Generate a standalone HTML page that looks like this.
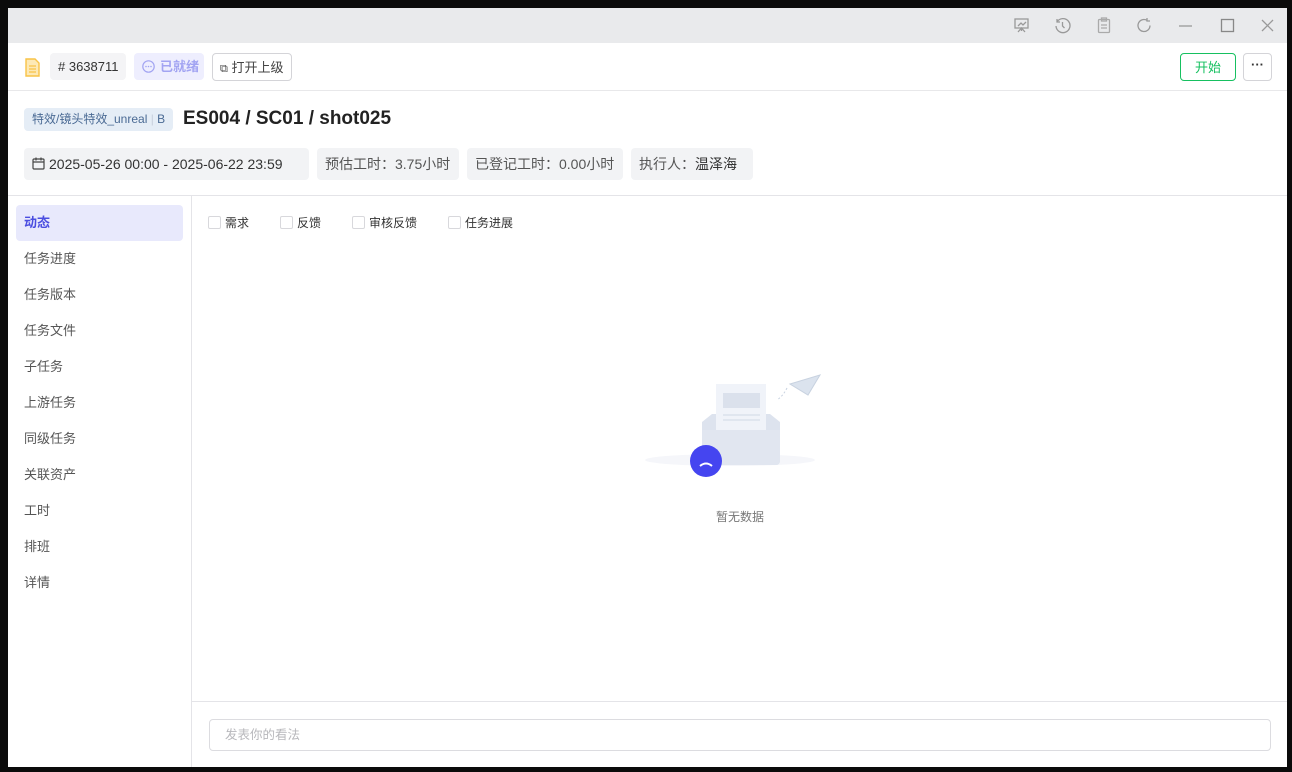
<!DOCTYPE html>
<html><head><meta charset="utf-8"><style>
*{box-sizing:border-box;margin:0;padding:0}
body{width:1292px;height:772px;background:#0b0b0b;font-family:"Liberation Sans","Noto Sans CJK SC",sans-serif;position:relative;overflow:hidden;color:#333}
#app{position:absolute;left:8px;top:8px;width:1279px;height:759px;background:#fff;overflow:hidden}
.tb{position:absolute;left:0;top:0;width:100%;height:35px;background:#e9eaec}
.tb svg{position:absolute;top:9px}
.hdr{position:absolute;left:0;top:35px;width:100%;height:48px;border-bottom:1px solid #e8e8ea}
.pill{position:absolute;top:10px;height:27px;border-radius:4px;font-size:13px;line-height:27px;padding:0 8px;white-space:nowrap}
.ttl{position:absolute;top:83px;left:0;width:100%;height:105px;border-bottom:1px solid #e4e4e8}
.chip{position:absolute;top:57px;height:32px;background:#f2f3f5;border-radius:4px;font-size:14px;line-height:32px;color:#555;padding:0 8px;white-space:nowrap}
.side{position:absolute;left:0;top:188px;width:184px;bottom:0;border-right:1px solid #e4e4e8}
.side div{height:36px;line-height:36px;font-size:13px;color:#555;padding-left:8px;margin:0 8px;border-radius:4px}
.side .act{background:#e8e9fc;color:#4a4de0;font-weight:bold;margin-top:9px}
.cb{position:absolute;top:208px;font-size:12px;color:#333;line-height:13px;white-space:nowrap}
.cb i{display:inline-block;width:13px;height:13px;border:1px solid #d8d8dc;border-radius:2px;vertical-align:-2px;margin-right:4px}
</style></head><body>
<div id="app">
<div class="tb">
<svg style="left:1005px" width="17" height="17" viewBox="0 0 17 17" fill="none" stroke="#999" stroke-width="1.3"><rect x="2" y="2" width="13" height="9"/><path d="M5 9l3-3 2 2 3-3M8.5 11v3M5 15l3.5-4 3.5 4"/></svg>
<svg style="left:1046px" width="17" height="17" viewBox="0 0 17 17" fill="none" stroke="#999" stroke-width="1.3"><path d="M3 5A7 7 0 1 1 2 9M3 2v3h3M8.5 5v4l2 2"/></svg>
<svg style="left:1088px" width="16" height="17" viewBox="0 0 16 17" fill="none" stroke="#aaa" stroke-width="1.3"><rect x="2.5" y="2.5" width="11" height="13" rx="1"/><rect x="5.5" y="1" width="5" height="3"/><path d="M5 8h6M5 11h6"/></svg>
<svg style="left:1128px" width="17" height="17" viewBox="0 0 17 17" fill="none" stroke="#999" stroke-width="1.3"><path d="M14 8.5A6 6 0 1 1 11 3.3M11 1v3h3"/></svg>
<svg style="left:1170px" width="16" height="17"><path d="M1 9h13" stroke="#999" stroke-width="1.3"/></svg>
<svg style="left:1212px" width="16" height="17"><rect x="1.5" y="2.5" width="12" height="12" fill="none" stroke="#888" stroke-width="1.3"/></svg>
<svg style="left:1252px" width="16" height="17"><path d="M2 3l11 11M13 3L2 14" stroke="#999" stroke-width="1.3"/></svg>
</div>
<div class="hdr">
<svg style="position:absolute;left:16px;top:15px" width="17" height="19" viewBox="0 0 17 19"><path d="M2 1h9l4 4v13H2z" fill="#fde9b5" stroke="#f8c347" stroke-width="1.4"/><path d="M5 8h7M5 11h7M5 14h7" stroke="#f8c347" stroke-width="1.3"/></svg>
<div class="pill" style="left:42px;background:#f4f4f6;color:#333;width:76px"># 3638711</div>
<div class="pill" style="left:126px;background:#eeeefe;color:#a2a4f2;font-weight:bold;width:70px;padding-left:8px"><svg width="13" height="13" viewBox="0 0 13 13" style="vertical-align:-2px;margin-right:5px"><circle cx="6.5" cy="6.5" r="5.7" fill="none" stroke="#a2a4f2" stroke-width="1.2"/><circle cx="4" cy="6.5" r=".8" fill="#a2a4f2"/><circle cx="6.5" cy="6.5" r=".8" fill="#a2a4f2"/><circle cx="9" cy="6.5" r=".8" fill="#a2a4f2"/></svg>已就绪</div>
<div class="pill" style="left:204px;border:1px solid #d4d4d8;height:28px;width:80px;color:#444;padding:0 7px"><span style="font-size:11px">⧉</span> 打开上级</div>
<div class="pill" style="left:1172px;border:1px solid #16c060;color:#16c060;width:56px;height:28px;text-align:center">开始</div>
<div class="pill" style="left:1235px;border:1px solid #d4d4d8;width:29px;height:28px;text-align:center;font-weight:bold;padding:0;line-height:22px">···</div>
</div>
<div class="ttl">
<div style="position:absolute;left:16px;top:17px;height:23px;background:#e5edf6;border-radius:4px;font-size:12px;line-height:23px;color:#4a6a94;padding:0 8px;white-space:nowrap">特效/镜头特效_unreal <span style="color:#c8d0dc">|</span> B</div>
<div style="position:absolute;left:175px;top:15px;font-size:19px;font-weight:bold;color:#222;line-height:26px;white-space:nowrap">ES004 / SC01 / shot025</div>
<div class="chip" style="left:16px;width:285px;color:#333"><svg width="13" height="13" viewBox="0 0 13 13" style="vertical-align:-1px;margin-right:4px" fill="none" stroke="#444" stroke-width="1.2"><rect x="1" y="2" width="11" height="10" rx="1"/><path d="M1 5h11M4 0.5v3M9 0.5v3"/></svg>2025-05-26 00:00 - 2025-06-22 23:59</div>
<div class="chip" style="left:309px;width:142px">预估工时：3.75小时</div>
<div class="chip" style="left:459px;width:156px">已登记工时：0.00小时</div>
<div class="chip" style="left:623px;width:122px">执行人：<span style="color:#333">温泽海</span></div>
</div>
<div class="side">
<div class="act">动态</div><div>任务进度</div><div>任务版本</div><div>任务文件</div><div>子任务</div><div>上游任务</div><div>同级任务</div><div>关联资产</div><div>工时</div><div>排班</div><div>详情</div>
</div>
<div class="cb" style="left:200px"><i></i>需求</div>
<div class="cb" style="left:272px"><i></i>反馈</div>
<div class="cb" style="left:344px"><i></i>审核反馈</div>
<div class="cb" style="left:440px"><i></i>任务进展</div>
<svg style="position:absolute;left:632px;top:352px" width="190" height="120" viewBox="0 0 190 120">
<ellipse cx="90" cy="100" rx="85" ry="6" fill="#f5f6fa"/>
<path d="M62 62l10-8h58l10 8v39a4 4 0 0 1-4 4H66a4 4 0 0 1-4-4z" fill="#dde3ee"/>
<rect x="76" y="24" width="50" height="60" fill="#f0f3f9"/>
<rect x="83" y="33" width="37" height="15" fill="#dbe1ec"/>
<path d="M83 55h37M83 60h37" stroke="#dbe1ec" stroke-width="1.5"/>
<path d="M62 70h78v31a4 4 0 0 1-4 4H66a4 4 0 0 1-4-4z" fill="#e1e6f0"/>
<path d="M150 24l30-9-12 20z" fill="#dbe3ee" stroke="#c8d2e0"/>
<path d="M147 28q-4 8-10 12" stroke="#c8d2e0" stroke-dasharray="2 2" fill="none"/>
<circle cx="66" cy="101" r="16" fill="#4545f0"/>
<path d="M60 106q6-5 12 0" stroke="#fff" stroke-width="2" fill="none"/>
</svg>
<div style="position:absolute;left:708px;top:500px;font-size:12px;color:#777">暂无数据</div>
<div style="position:absolute;left:184px;top:693px;right:0;border-top:1px solid #e4e4e8"></div>
<div style="position:absolute;left:201px;top:711px;width:1062px;height:32px;border:1px solid #dcdce0;border-radius:4px;font-size:12.5px;color:#b8b8bc;line-height:30px;padding-left:15px">发表你的看法</div>
</div>
</body></html>
